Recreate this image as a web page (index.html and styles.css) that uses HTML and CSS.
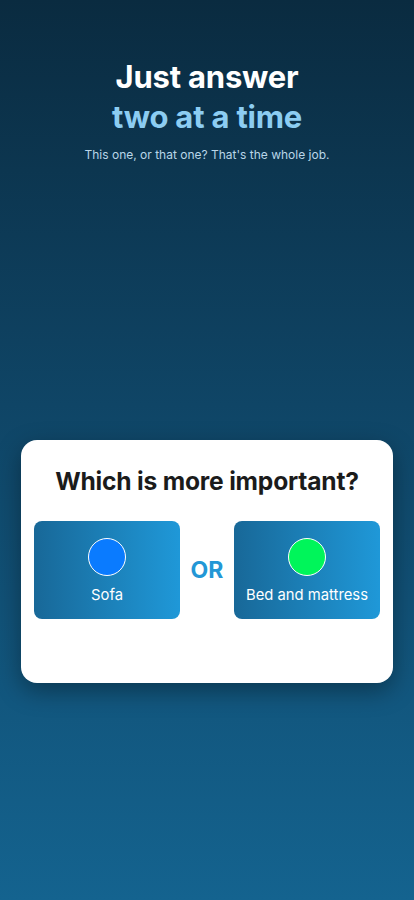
FILE: index.html
```html
<!DOCTYPE html>
<html>
<head>
<meta charset="utf-8">
<link rel="stylesheet" href="styles.css">
</head>
<body>
<main class="screen">
  <header class="hero">
    <h1 class="title">Just answer<span class="accent">two at a time</span></h1>
    <p class="subtitle">This one, or that one? That's the whole job.</p>
  </header>
  <section class="card">
    <h2 class="question">Which is more important?</h2>
    <div class="choices">
      <button class="option"><span class="dot dot-blue"></span><span class="label">Sofa</span></button>
      <span class="or">OR</span>
      <button class="option"><span class="dot dot-green"></span><span class="label">Bed and mattress</span></button>
    </div>
  </section>
</main>
</body>
</html>
```
FILE: styles.css
```css
* { box-sizing: border-box; }
html, body { margin: 0; padding: 0; }
body {
  font-family: Inter, "Noto Sans", sans-serif;
  background: linear-gradient(180deg, #0a2b40 0%, #0f4566 45%, #14638f 100%);
  min-height: 900px;
}
.screen {
  width: 414px;
  height: 900px;
  display: flex;
  flex-direction: column;
  align-items: center;
}
.hero {
  padding-top: 57px;
  text-align: center;
}
.title {
  margin: 0;
  font-size: 31px;
  line-height: 40px;
  font-weight: 700;
  color: #ffffff;
  letter-spacing: -0.2px;
}
.accent {
  display: block;
  color: #8ccdf2;
}
.subtitle {
  margin: 10px 0 0;
  font-size: 12px;
  line-height: 16px;
  color: #b9d6e8;
}
.card {
  margin-top: 277px;
  width: 372px;
  height: 243px;
  background: #ffffff;
  border-radius: 16px;
  box-shadow: 0 8px 24px rgba(0, 0, 0, 0.35);
  padding: 24px 13px 0;
}
.question {
  margin: 0;
  text-align: center;
  font-size: 24.6px;
  line-height: 34px;
  font-weight: 700;
  color: #1b1b1b;
  letter-spacing: -0.2px;
}
.choices {
  margin-top: 23px;
  display: flex;
  align-items: center;
  justify-content: space-between;
}
.option {
  width: 146px;
  height: 98px;
  border: none;
  border-radius: 8px;
  background: linear-gradient(90deg, #186898 0%, #1f98d8 100%);
  display: flex;
  flex-direction: column;
  align-items: center;
  padding: 17px 0 0;
  font-family: inherit;
  cursor: pointer;
}
.dot {
  width: 38px;
  height: 38px;
  border-radius: 50%;
  border: 1.5px solid #ffffff;
}
.dot-blue { background: #0a7bff; }
.dot-green { background: #00f55a; }
.label {
  margin-top: 10px;
  font-size: 14.8px;
  line-height: 18px;
  color: #ffffff;
}
.or {
  font-size: 23px;
  font-weight: 700;
  color: #2397d6;
}
```
